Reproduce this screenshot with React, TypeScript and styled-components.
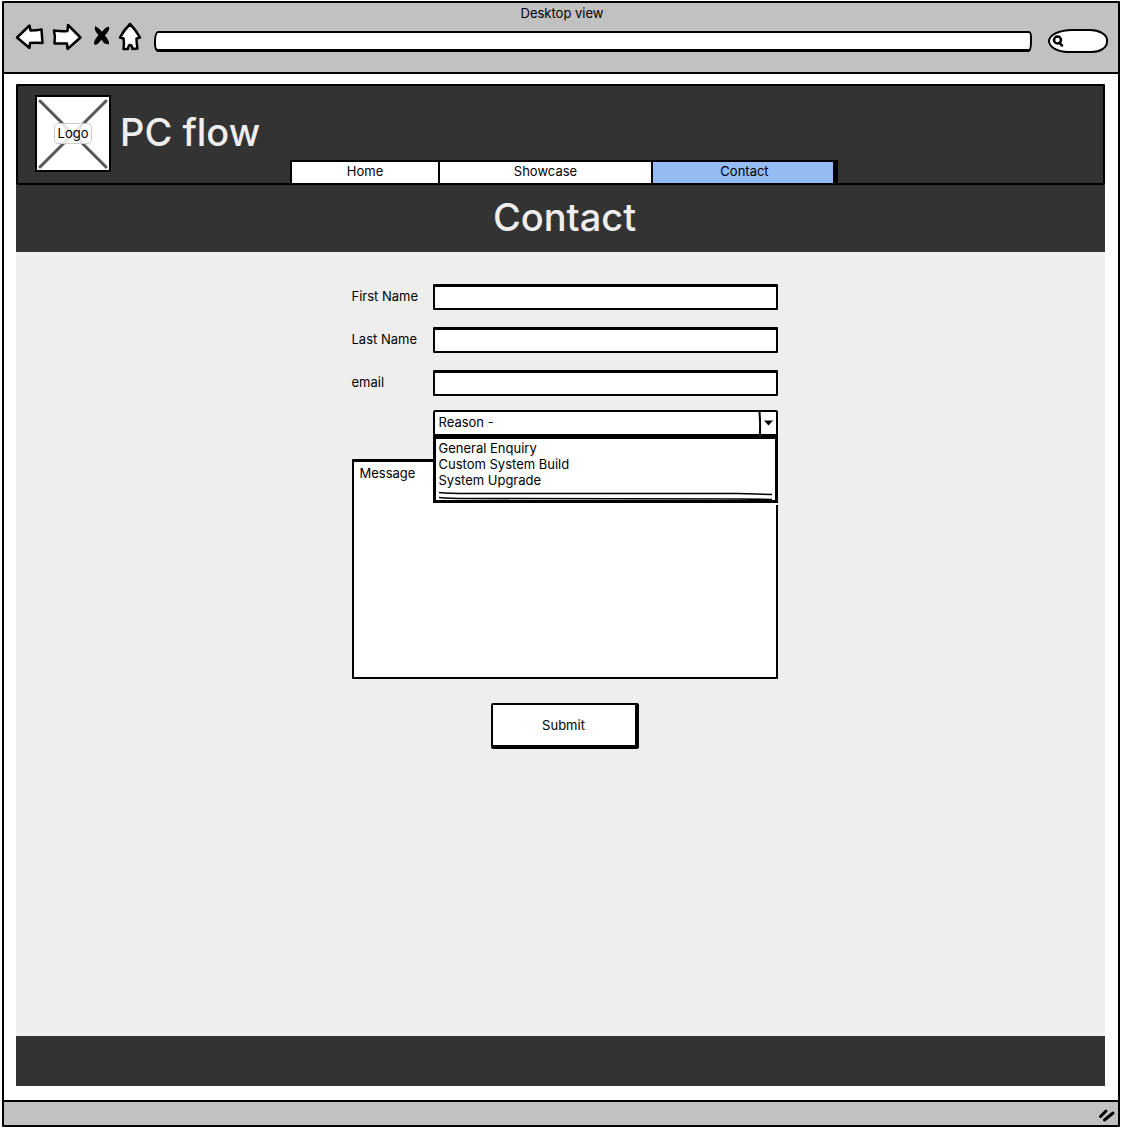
import React from "react";
import styled, { createGlobalStyle } from "styled-components";

const ink = "#000";
const dark = "#333";
const pale = "#eee";
const chrome = "#c1c1c1";
const sans = `Inter, "Liberation Sans", sans-serif`;

const GlobalStyle = createGlobalStyle`
  *, *::before, *::after { box-sizing: border-box; }
  body {
    margin: 0;
    background: #fff;
    color: ${ink};
    font: 400 13px/16px ${sans};
  }
  button, input, select, textarea { font: inherit; color: inherit; }
  input:focus, select:focus, textarea:focus { outline: none; }
`;

const Screen = styled.div`
  display: flex;
  min-height: 100vh;
  padding: 1px 1px 1px 2px;
`;

const Browser = styled.div`
  flex: 1;
  display: flex;
  flex-direction: column;
  border: 2px solid ${ink};
  border-radius: 1px;
`;

const Toolbar = styled.div`
  padding: 0 10px 14px 12px;
  background: ${chrome};
  border-bottom: 2px solid ${ink};
`;

const WindowTitle = styled.div`
  padding-bottom: 1px;
  line-height: 20px;
  text-align: center;
`;

const ToolbarRow = styled.div`
  display: flex;
  align-items: center;
  gap: 8px;
`;

const IconButton = styled.button`
  display: flex;
  padding: 0;
  margin-bottom: 6px;
  border: 0;
  background: none;
`;

const Icon = styled.svg`
  display: block;
  overflow: visible;
  fill: #fff;
  stroke: ${ink};
  stroke-width: 2.5;
  stroke-linejoin: round;
  stroke-linecap: round;
`;

const SolidIcon = styled(Icon)`
  fill: ${ink};
  stroke-width: 1;
`;

const AddressInput = styled.input`
  flex: 1;
  min-width: 0;
  height: 21px;
  padding: 0 8px;
  border: 2px solid ${ink};
  border-bottom-width: 3px;
  border-radius: 4px 3px 3px 4px / 10px 6px 10px 8px;
  background: #fff;
`;

const SearchBox = styled.label`
  display: flex;
  align-items: center;
  width: 60px;
  height: 24px;
  margin-left: 8px;
  padding: 2px;
  border: 2px solid ${ink};
  border-radius: 24px 18px 16px 20px / 12px 11px 11px 12px;
  background: #fff;
`;

const SearchInput = styled.input`
  flex: 1;
  min-width: 0;
  padding: 0 2px;
  border: 0;
  background: none;
`;

const Page = styled.div`
  flex: 1;
  display: flex;
  flex-direction: column;
  padding: 10px 13px 14px 12px;
  background: #fff;
`;

const Header = styled.header`
  display: grid;
  grid-template-columns: 1fr auto 1fr;
  padding: 0 10px 0 17px;
  border: 2px solid ${ink};
  border-radius: 1px;
  background: ${dark};
`;

const Brand = styled.div`
  display: flex;
  align-items: center;
  gap: 9px;
  padding: 9px 0 11px;
`;

const Logo = styled.div`
  display: grid;
  place-items: center;
  width: 76px;
  height: 77px;
  border: 2px solid ${ink};
  background: #fff;
  & > * { grid-area: 1 / 1; }
`;

const LogoLabel = styled.span`
  z-index: 1;
  padding: 1px 3px 2px;
  border: 1px solid #ccc;
  border-radius: 4px;
  background: rgba(255, 255, 255, 0.85);
`;

const BrandName = styled.span`
  padding-bottom: 3px;
  color: ${pale};
  font-size: 38px;
  font-weight: 500;
  line-height: 48px;
  white-space: nowrap;
`;

const Tabs = styled.nav`
  display: flex;
  align-self: end;
  margin-bottom: -2px;
  border: 2px solid ${ink};
  background: #fff;
`;

const Tab = styled.a<{ $width: number; $active?: boolean }>`
  width: ${(p) => p.$width}px;
  padding: 1px 0 4px;
  background: ${(p) => (p.$active ? "#94bbf2" : "#fff")};
  color: inherit;
  text-align: center;
  text-decoration: none;
  & + & { border-left: 2px solid ${ink}; }
  &:last-child { box-shadow: inset -3px 0 0 ${ink}; }
`;

const Hero = styled.div`
  padding: 8px 0 11px 8px;
  background: ${dark};
`;

const Heading = styled.h1`
  margin: 0;
  color: ${pale};
  font-size: 38px;
  font-weight: 500;
  line-height: 48px;
  text-align: center;
`;

const Main = styled.main`
  flex: 1;
  padding: 32px 0 32px 8px;
  background: ${pale};
`;

const Form = styled.form`
  display: flex;
  flex-direction: column;
  max-width: 426px;
  margin: 0 auto;
`;

const Fields = styled.div`
  display: flex;
  flex-direction: column;
  gap: 17px;
`;

const Row = styled.div`
  display: grid;
  grid-template-columns: 81px 1fr;
`;

const FieldLabel = styled.label`
  padding-top: 4px;
`;

const TextInput = styled.input`
  min-width: 0;
  height: 26px;
  padding: 0 6px;
  border: 2px solid ${ink};
  border-top-width: 3px;
  border-radius: 1px;
  background: #fff;
`;

const ReasonRow = styled(Row)`
  margin: 14px 0 23px;
`;

const SelectBox = styled.div`
  position: relative;
  grid-column: 2;
  display: grid;
  grid-template-columns: 1fr 20px;
`;

const Select = styled.select`
  grid-area: 1 / 1 / 2 / 3;
  height: 26px;
  padding: 0 24px 2px 4px;
  border: 2px solid ${ink};
  border-radius: 2px;
  background: #fff;
  appearance: none;
`;

const Arrow = styled.svg`
  grid-area: 1 / 2;
  display: block;
  pointer-events: none;
`;

const Options = styled.ul`
  position: absolute;
  top: 25px;
  left: 0;
  right: 0;
  z-index: 2;
  margin: 0;
  padding: 1px 3px 0;
  list-style: none;
  border: 3px solid ${ink};
  border-top-width: 4px;
  background: #fff;
  box-shadow: 0 2px 0 #fff;
`;

const DoubleRule = styled.svg`
  display: block;
  width: 100%;
  height: 12px;
`;

const Message = styled.textarea`
  height: 220px;
  padding: 3px 6px;
  border: 2px solid ${ink};
  border-top-width: 3px;
  border-radius: 1px;
  background: #fff;
  resize: none;
  &::placeholder { color: ${ink}; opacity: 1; }
`;

const Submit = styled.button`
  align-self: center;
  width: 148px;
  margin-top: 24px;
  padding: 12px 0;
  border: 2px solid ${ink};
  border-right-width: 4px;
  border-bottom-width: 4px;
  border-radius: 2px;
  background: #fff;
`;

const Footer = styled.footer`
  height: 50px;
  background: ${dark};
`;

const StatusBar = styled.div`
  display: flex;
  justify-content: flex-end;
  align-items: flex-end;
  height: 25px;
  padding: 0 2px 1px 0;
  border-top: 2px solid ${ink};
  background: ${chrome};
`;

const fields = [
  { id: "first-name", label: "First Name", type: "text" },
  { id: "last-name", label: "Last Name", type: "text" },
  { id: "email", label: "email", type: "email" },
];

const reasons = ["General Enquiry", "Custom System Build", "System Upgrade"];

function BrowserToolbar() {
  return (
    <Toolbar>
      <WindowTitle>Desktop view</WindowTitle>
      <ToolbarRow>
        <IconButton type="button" aria-label="Back">
          <Icon width="29" height="28" viewBox="0 0 29 28">
            <path d="M1 13.5 13.5 1.500 14.5 6.500Q20 6.500 25.500 5.500Q26 12 26.500 19Q20 18.500 14 19L13.500 24Z" />
          </Icon>
        </IconButton>
        <IconButton type="button" aria-label="Forward">
          <Icon width="29" height="28" viewBox="0 0 29 28">
            <path d="M27.500 13.500 15 1 14.500 7Q8 7.500 1 6.500Q2.500 12 1.500 19.500Q8 19.500 14 19.500L14.500 25Z" />
          </Icon>
        </IconButton>
        <IconButton type="button" aria-label="Stop">
          <SolidIcon width="21" height="28" viewBox="0 0 21 28">
            <path d="M5.500 3Q9 4 12 8.500Q15 3.500 18.500 3Q20 5 14.500 11.500Q19 17 18.500 20Q14 20.500 11.500 15Q8 20.500 5 20.500Q3 18 9 11Q4 6 5.500 3Z" />
          </SolidIcon>
        </IconButton>
        <IconButton type="button" aria-label="Home">
          <Icon width="27" height="28" viewBox="0 0 27 28">
            <path d="M11 0Q16.500 5.500 21 13.500L17.500 14.500Q17.500 19 18.500 24.500L13.500 25Q13 21 11 21Q9.500 21 9 25L4.500 25Q5.500 19 4.500 14.500L1 13.500Q5 6 11 0Z" />
          </Icon>
        </IconButton>
        <AddressInput type="text" aria-label="Address" />
        <SearchBox>
          <Icon width="12" height="14" viewBox="0 0 12 14" aria-hidden="true">
            <circle cx="5.5" cy="6" r="3.5" />
            <path d="M7.500 9 10 11.500" />
          </Icon>
          <SearchInput type="text" aria-label="Search" />
        </SearchBox>
      </ToolbarRow>
    </Toolbar>
  );
}

function SiteHeader() {
  return (
    <Header>
      <Brand>
        <Logo>
          <svg width="72" height="73" viewBox="0 0 72 73" aria-hidden="true">
            <path
              d="M3 4 69 70M69 4 3 70"
              stroke="#555"
              strokeWidth="3"
              strokeLinecap="round"
            />
          </svg>
          <LogoLabel>Logo</LogoLabel>
        </Logo>
        <BrandName>PC flow</BrandName>
      </Brand>
      <Tabs>
        <Tab href="#home" $width={146}>Home</Tab>
        <Tab href="#showcase" $width={213}>Showcase</Tab>
        <Tab href="#contact" $width={185} $active>Contact</Tab>
      </Tabs>
    </Header>
  );
}

function ContactForm() {
  return (
    <Form onSubmit={(e) => e.preventDefault()}>
      <Fields>
        {fields.map((f) => (
          <Row key={f.id}>
            <FieldLabel htmlFor={f.id}>{f.label}</FieldLabel>
            <TextInput id={f.id} type={f.type} />
          </Row>
        ))}
      </Fields>
      <ReasonRow>
        <SelectBox>
          <Select aria-label="Reason">
            <option>Reason -</option>
          </Select>
          <Arrow width="20" height="26" viewBox="0 0 20 26" aria-hidden="true">
            <path d="M1.500 1Q2.500 13 2 25" fill="none" stroke="#000" strokeWidth="2" />
            <path d="M6 10.500H15L10.500 15.500Z" />
          </Arrow>
          <Options>
            {reasons.map((r) => (
              <li key={r}>{r}</li>
            ))}
            <li role="separator">
              <DoubleRule viewBox="0 0 334 12" preserveAspectRatio="none">
                <path
                  d="M0 4.500Q10 5.500 30 5.500H300L334 6.500M0 9.500Q10 10.500 30 10.500L300 11 334 11.500"
                  fill="none"
                  stroke="#000"
                  strokeWidth="1.600"
                />
              </DoubleRule>
            </li>
          </Options>
        </SelectBox>
      </ReasonRow>
      <Message aria-label="Message" placeholder="Message" />
      <Submit type="submit">Submit</Submit>
    </Form>
  );
}

export default function App() {
  return (
    <Screen>
      <GlobalStyle />
      <Browser>
        <BrowserToolbar />
        <Page>
          <SiteHeader />
          <Hero>
            <Heading>Contact</Heading>
          </Hero>
          <Main>
            <ContactForm />
          </Main>
          <Footer />
        </Page>
        <StatusBar>
          <svg width="18" height="18" viewBox="0 0 18 18" aria-hidden="true">
            <path
              d="M2.500 10.500 8 5M6.500 14 15 7"
              stroke="#000"
              strokeWidth="3"
              strokeLinecap="round"
            />
          </svg>
        </StatusBar>
      </Browser>
    </Screen>
  );
}
